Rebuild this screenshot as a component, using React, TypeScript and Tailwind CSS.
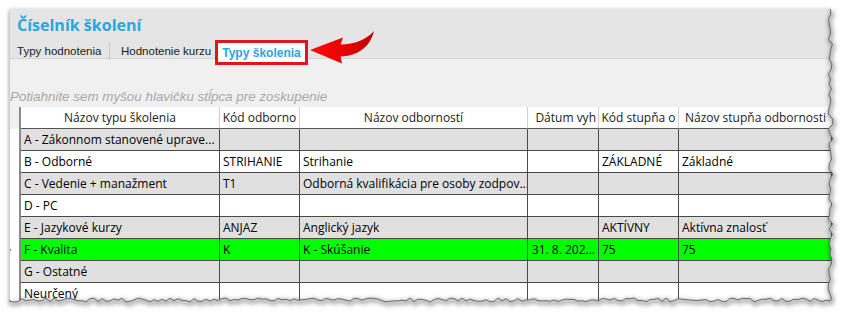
import React from "react";

const cols = "grid grid-cols-[11px_199px_80px_228px_71px_80px_153px]";

type Row = { c: string[]; bg: string; cur?: boolean };

const rows: Row[] = [
  { c: ["A - Zákonnom stanovené uprave...", "", "", "", "", ""], bg: "bg-[#e0e0e0]" },
  { c: ["B - Odborné", "STRIHANIE", "Strihanie", "", "ZÁKLADNÉ", "Základné"], bg: "bg-white" },
  { c: ["C - Vedenie + manažment", "T1", "Odborná kvalifikácia pre osoby zodpov...", "", "", ""], bg: "bg-[#e0e0e0]" },
  { c: ["D - PC", "", "", "", "", ""], bg: "bg-white" },
  { c: ["E - Jazykové kurzy", "ANJAZ", "Anglický jazyk", "", "AKTÍVNY", "Aktívna znalosť"], bg: "bg-[#e0e0e0]" },
  { c: ["F - Kvalita", "K", "K - Skúšanie", "31. 8. 202...", "75", "75"], bg: "bg-[#00ff00]", cur: true },
  { c: ["G - Ostatné", "", "", "", "", ""], bg: "bg-[#e0e0e0]" },
  { c: ["Neurčený", "", "", "", "", ""], bg: "bg-white" },
];

const headers = ["Názov typu školenia", "Kód odborno", "Názov odborností", "Dátum vyh", "Kód stupňa o", "Názov stupňa odbornosti"];

function jag(n: number, seed: number) {
  let s = seed;
  const out: number[] = [];
  for (let i = 0; i < n; i++) {
    s = (s * 9301 + 49297) % 233280;
    out.push(s / 233280);
  }
  return out;
}

function TornEdges() {
  const r = jag(80, 7);
  const b = jag(240, 13);
  const pts: string[] = [];
  for (let i = 0; i <= 58; i++) {
    const y = 9 + i * 5;
    const x = 828 + r[i % r.length] * 5;
    pts.push(`${x.toFixed(1)},${y}`);
  }
  for (let i = 0; i <= 205; i++) {
    const x = 830 - i * 4;
    if (x < 10) break;
    const y = 298 + b[i % b.length] * 4;
    pts.push(`${x},${y.toFixed(1)}`);
  }
  pts.push(`10,300`);
  const edge = pts.join(" ");
  const fill = `${edge} 10,320 850,320 850,0 ${pts[0].split(",")[0]},0`;
  return (
    <svg className="pointer-events-none absolute left-0 top-0" width="850" height="320">
      <defs>
        <filter id="sh" x="-5%" y="-5%" width="110%" height="110%">
          <feGaussianBlur stdDeviation="2" />
        </filter>
      </defs>
      <polygon points={fill} fill="#ffffff" />
      <polyline points={edge} fill="none" stroke="#000" strokeOpacity="0.35" strokeWidth="4" filter="url(#sh)" transform="translate(1,2)" />
      <polyline points={edge} fill="none" stroke="#6b6b6b" strokeWidth="1" />
    </svg>
  );
}

function Arrow() {
  return (
    <svg className="pointer-events-none absolute left-[300px] top-[26px]" width="80" height="44" viewBox="300 26 80 44">
      <defs>
        <linearGradient id="ag" x1="0" y1="0" x2="1" y2="0">
          <stop offset="0" stopColor="#ff0a0a" />
          <stop offset="0.6" stopColor="#e60000" />
          <stop offset="1" stopColor="#b80000" />
        </linearGradient>
      </defs>
      <path
        d="M310,50 L343,37.5 L340.5,44.5 C355,44 366,40 374,31 C370,47 358,56 340.5,56.5 L342,63.5 Z"
        fill="url(#ag)"
      />
    </svg>
  );
}

export default function App() {
  return (
    <div className="relative h-[320px] w-[850px] overflow-hidden bg-white">
      <div className="ml-[10px] mt-[9px] h-[293px] w-[822px] overflow-hidden bg-[#f0f0f0] shadow-[-1px_1px_4px_rgba(0,0,0,0.35)]">
        <div className="h-[50px] border-b border-[#d4d4d4] bg-[#e5e5e5] pl-[7px]">
          <div className="pt-[5px] font-['Open_Sans',sans-serif] text-[16px] font-bold leading-[22px] text-[#2aa5de]">
            Číselník školení
          </div>
          <div className="mt-[4px] flex items-end whitespace-nowrap font-['Liberation_Sans',Arial,sans-serif] text-[11.5px] text-[#222]">
            <div className="w-[93px] flex-none border-r border-[#c8c8c8] leading-[18px]">Typy hodnotenia</div>
            <div className="w-[105px] flex-none pl-[11px] leading-[18px]">Hodnotenie kurzu</div>
            <div className="relative mb-[-5px] flex h-[25px] w-[93px] flex-none items-center justify-center border-[3px] border-[#e5141b] bg-white text-[12px] font-bold text-[#2aa5de]">
              Typy školenia
            </div>
          </div>
        </div>
        <div className="h-[48px] pt-[30px] font-['Liberation_Sans',Arial,sans-serif] text-[13.4px] italic leading-[16px] text-[#a8a8a8]">
          Potiahnite sem myšou hlavičku stĺpca pre zoskupenie
        </div>
        <div className="font-['Open_Sans',sans-serif] text-[12px] text-black">
          <div className={`${cols} h-[22px] bg-white`}>
            <div className="border-r-2 border-[#8a8a8a] bg-[#f0f0f0]" />
            {headers.map((h, i) => (
              <div
                key={i}
                className={`overflow-hidden whitespace-nowrap border-b border-[#555] ${i < 5 ? "border-r border-r-[#d0d0d0]" : ""} ${i === 3 ? "pr-[2px] text-right" : "text-center"} leading-[21px] text-[#222]`}
              >
                {h}
              </div>
            ))}
          </div>
          {rows.map((r, ri) => (
            <div key={ri} className={`${cols} h-[22px]`}>
              <div className="relative border-r-2 border-[#8a8a8a] bg-white">
                {r.cur && <div className="absolute left-[-1px] top-[10px] h-[2px] w-[2px] bg-[#2aa5de]" />}
              </div>
              {r.c.map((c, ci) => (
                <div
                  key={ci}
                  className={`${r.bg} overflow-hidden whitespace-nowrap border-b border-r border-[#4a4a4a] ${ci === 3 ? "pr-[3px] text-right" : "pl-[3px]"} leading-[21px]`}
                >
                  {c}
                </div>
              ))}
            </div>
          ))}
        </div>
      </div>
      <Arrow />
      <TornEdges />
    </div>
  );
}
